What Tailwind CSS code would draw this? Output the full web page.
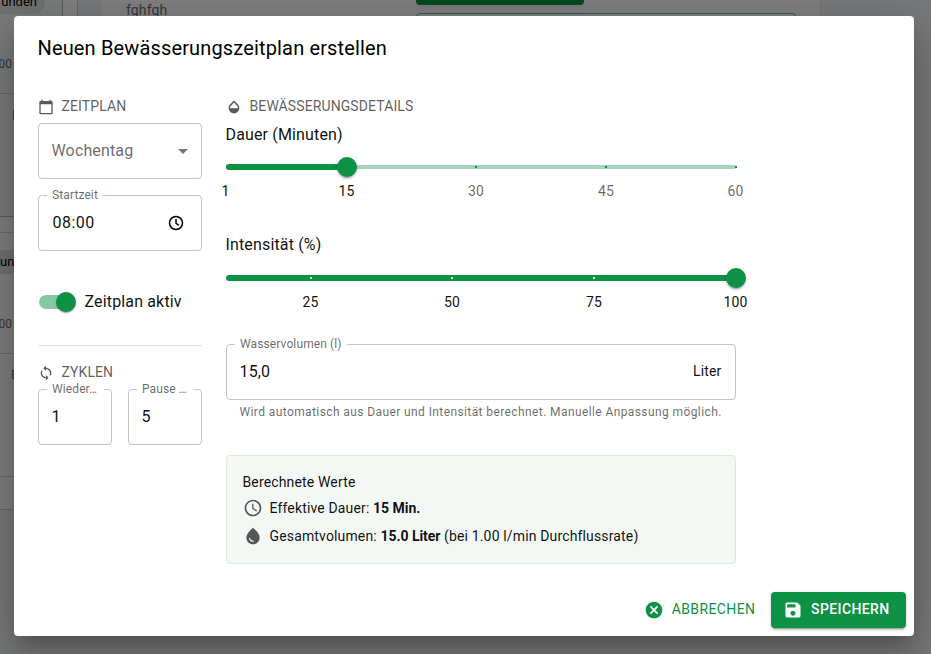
<!DOCTYPE html>
<html lang="de">
<head>
<meta charset="utf-8">
<title>Bewässerungszeitplan</title>
<script src="https://cdn.jsdelivr.net/npm/@tailwindcss/browser@4"></script>
</head>
<body class="relative h-[654px] w-[931px] overflow-hidden bg-[#f0f2f5] font-['Roboto',sans-serif] text-black/95">

<!-- Page behind the dialog -->
<div class="flex h-full items-start text-[14px]">
  <div class="h-[510px] w-[78px] shrink-0 border-r border-b border-black/20 bg-white">
    <div class="flex h-[217px] w-[63px] flex-col rounded-br border-r border-b border-black/25 bg-[#f3f8f5]">
      <div class="-mt-[10px] flex h-6 w-[45px] items-center justify-end rounded-r-full bg-black/8 pr-2 text-[13px] text-black">unden</div>
      <div class="mt-[40px] h-5 w-3 text-right text-[12px] leading-5 whitespace-nowrap text-black/60 [direction:rtl]">00</div>
      <div class="mt-[19px] h-px bg-black/15"></div>
      <div class="mt-4 ml-[13px] h-2.5 w-px bg-red-900/60"></div>
    </div>
    <div class="mt-[15px] flex w-[63px] flex-col border-t border-black/15">
      <div class="mt-[17px] flex h-6 items-center bg-black/10 text-[13px] text-black">unden</div>
      <div class="mt-[40px] h-5 w-3 text-right text-[12px] leading-5 text-black/60 [direction:rtl]">00</div>
      <div class="mt-[19px] h-px bg-black/15"></div>
      <div class="mt-[11px] ml-[11px] h-5 text-[13px] leading-5 text-red-900/70">E</div>
      <div class="mt-[91px] h-px bg-black/20"></div>
    </div>
  </div>
  <div class="ml-[22px] flex h-[510px] w-[721px] shrink-0 border-x border-black/8 bg-white">
    <div class="w-[315px] pl-[25px] text-[14px] leading-5 tracking-[0.01071em] text-black/60">fghfgh</div>
    <div class="w-[380px]">
      <div class="h-[5px] w-[168px] rounded-b bg-[#0d9144] shadow-md"></div>
      <div class="mt-2 h-10 rounded border border-[#0d9144]/60"></div>
    </div>
  </div>
</div>

<!-- Dialog -->
<div class="absolute inset-0 bg-black/50 px-[14px] py-4">
  <div class="flex h-[620px] w-[900px] flex-col rounded bg-white shadow-[0_11px_15px_-7px_rgba(0,0,0,0.2),0_24px_38px_3px_rgba(0,0,0,0.14),0_9px_46px_8px_rgba(0,0,0,0.12)]">
    <h2 class="pt-4 pr-6 pl-[23.5px] text-[20px] leading-8 tracking-[0.0075em] text-black">Neuen Bewässerungszeitplan erstellen</h2>

    <div class="mt-[31px] flex h-[481px] shrink-0 gap-6 px-6">
      <div class="flex w-[164px] flex-col">
        <div class="flex h-[22px] items-center gap-[7.5px] text-[14px] tracking-[0.00714em] text-black/65">
          <svg class="mt-px size-4 fill-black/65" viewBox="0 0 24 24"><path d="M20 3h-1V1h-2v2H7V1H5v2H4c-1.1 0-2 .9-2 2v16c0 1.1.9 2 2 2h16c1.1 0 2-.9 2-2V5c0-1.1-.9-2-2-2m0 18H4V8h16z"/></svg>
          ZEITPLAN
        </div>
        <div class="mt-[6px] flex h-14 items-center justify-between rounded border border-black/23 pr-[6px] pl-[12.5px] text-[16px] tracking-[0.00938em] text-black/60">
          Wochentag
          <svg class="size-6 fill-black/54" viewBox="0 0 24 24"><path d="m7 10 5 5 5-5z"/></svg>
        </div>
        <div class="relative mt-4 flex h-14 items-center justify-between rounded border border-black/23 pr-[17px] pl-[13.5px] text-[16px]">
          <span class="absolute -top-[9px] left-[8px] bg-white px-[5px] text-[12px] leading-4 tracking-[0.00938em] text-black/60">Startzeit</span>
          <span class="tracking-[0.03em]">08:00</span>
          <svg class="size-4 fill-none stroke-black stroke-[1.5]" viewBox="0 0 16 16"><circle cx="8" cy="8" r="6.5"/><path d="M8 4v4.2l2.8 2.2"/></svg>
        </div>
        <div class="mt-[41px] flex h-5 items-center text-[16px] tracking-[0.00938em]">
          <div class="relative ml-px h-[14px] w-[34px] rounded-full bg-[#0d9144]/50">
            <div class="absolute -top-[3px] left-[17px] size-5 rounded-full bg-[#0d9144] shadow-[0_2px_1px_-1px_rgba(0,0,0,0.2),0_1px_1px_0_rgba(0,0,0,0.14),0_1px_3px_0_rgba(0,0,0,0.12)]"></div>
          </div>
          <span class="ml-[11.5px]">Zeitplan aktiv</span>
        </div>
        <div class="mt-[33px] h-px bg-black/12"></div>
        <div class="mt-[15px] flex h-[22px] items-center gap-[7.5px] text-[14px] tracking-[0.00714em] text-black/65">
          <svg class="mt-px size-4 fill-black/65" viewBox="0 0 24 24"><path d="M12 4V1L8 5l4 4V6c3.31 0 6 2.69 6 6 0 1.01-.25 1.97-.7 2.8l1.46 1.46C19.54 15.03 20 13.57 20 12c0-4.42-3.58-8-8-8m0 14c-3.31 0-6-2.69-6-6 0-1.01.25-1.97.7-2.8L5.24 7.74C4.46 8.97 4 10.43 4 12c0 4.42 3.58 8 8 8v3l4-4-4-4z"/></svg>
          ZYKLEN
        </div>
        <div class="mt-[6px] flex gap-4">
          <div class="relative flex h-14 flex-1 items-center rounded border border-black/23 pl-[12.5px] text-[16px]">
            <span class="absolute -top-[9px] left-[8px] w-[57px] bg-white pl-[5px] text-[12px] leading-4 tracking-[0.00938em] text-black/60">Wieder…</span>
            1
          </div>
          <div class="relative flex h-14 flex-1 items-center rounded border border-black/23 pl-[12.5px] text-[16px]">
            <span class="absolute -top-[9px] left-[8px] w-[57px] bg-white pl-[5px] text-[12px] leading-4 tracking-[0.00938em] text-black/60">Pause …</span>
            5
          </div>
        </div>
      </div>

      <div class="flex w-[510px] flex-col">
        <div class="flex h-[22px] items-center gap-[7.5px] text-[14px] tracking-[0.00714em] text-black/65">
          <svg class="mt-px size-4 fill-black/65" viewBox="0 0 24 24"><path d="M17.66 8 12 2.35 6.34 8C4.78 9.56 4 11.64 4 13.64s.78 4.11 2.34 5.67 3.61 2.35 5.66 2.35 4.1-.79 5.66-2.35S20 15.64 20 13.64 19.22 9.56 17.66 8M6 14c.01-2 .62-3.27 1.76-4.4L12 5.27l4.24 4.38C17.38 10.77 17.99 12 18 14z"/></svg>
          BEWÄSSERUNGSDETAILS
        </div>
        <div class="mt-[6px] -ml-[0.5px] h-6 text-[16px] leading-6 tracking-[0.00938em]">Dauer (Minuten)</div>
        <div class="relative mt-[18px] h-1 rounded-full bg-[#0d9144]/38 text-[14px] leading-5 tracking-[0.01071em]">
          <div class="absolute -top-px left-0 h-[6px] w-[121px] rounded-full bg-[#0d9144]"></div>
          <div class="absolute top-px left-[249px] size-[2px] bg-[#0d9144]"></div>
          <div class="absolute top-px left-[379px] size-[2px] bg-[#0d9144]"></div>
          <div class="absolute top-px left-[509px] size-[2px] bg-[#0d9144]"></div>
          <div class="absolute -top-2 left-[111px] size-5 rounded-full bg-[#0d9144] shadow-[0_3px_1px_-2px_rgba(0,0,0,0.2),0_2px_2px_0_rgba(0,0,0,0.14),0_1px_5px_0_rgba(0,0,0,0.12)]"></div>
          <span class="absolute top-4 -left-[0.5px] -translate-x-1/2">1</span>
          <span class="absolute top-4 left-[120.5px] -translate-x-1/2">15</span>
          <span class="absolute top-4 left-[250px] -translate-x-1/2 text-black/60">30</span>
          <span class="absolute top-4 left-[380px] -translate-x-1/2 text-black/60">45</span>
          <span class="absolute top-4 left-[509.5px] -translate-x-1/2 text-black/60">60</span>
        </div>
        <div class="mt-[64px] -ml-[0.5px] h-6 text-[16px] leading-6 tracking-[0.00938em]">Intensität (%)</div>
        <div class="relative mt-[18px] h-[6px] rounded-full bg-[#0d9144] text-[14px] leading-5 tracking-[0.01071em]">
          <div class="absolute top-[2px] left-[84px] size-[2px] bg-white/80"></div>
          <div class="absolute top-[2px] left-[225px] size-[2px] bg-white/80"></div>
          <div class="absolute top-[2px] left-[367px] size-[2px] bg-white/80"></div>
          <div class="absolute -top-[7px] left-[500px] size-5 rounded-full bg-[#0d9144] shadow-[0_3px_1px_-2px_rgba(0,0,0,0.2),0_2px_2px_0_rgba(0,0,0,0.14),0_1px_5px_0_rgba(0,0,0,0.12)]"></div>
          <span class="absolute top-[17px] left-[84.5px] -translate-x-1/2">25</span>
          <span class="absolute top-[17px] left-[226px] -translate-x-1/2">50</span>
          <span class="absolute top-[17px] left-[368px] -translate-x-1/2">75</span>
          <span class="absolute top-[17px] left-[509.5px] -translate-x-1/2">100</span>
        </div>
        <div class="relative mt-[63px] flex h-14 shrink-0 items-center justify-between rounded border border-black/23 pr-[13.5px] pl-[12.5px] text-[16px] tracking-[0.00938em]">
          <span class="absolute -top-[9px] left-[8px] bg-white px-[5px] text-[12px] leading-4 tracking-[0.00938em] text-black/60">Wasservolumen (l)</span>
          15,0
          <span class="-mt-px text-[14px] tracking-[0.01071em]">Liter</span>
        </div>
        <div class="mt-[2px] pl-[13.5px] text-[12px] leading-5 tracking-[0.03333em] whitespace-nowrap text-black/60">Wird automatisch aus Dauer und Intensität berechnet. Manuelle Anpassung möglich.</div>
        <div class="mt-[33px] flex h-[109px] shrink-0 flex-col rounded border border-[#d9ebe0] bg-[#f3f8f5] pt-4 pr-4 pl-[15.5px] text-[14px] leading-5 tracking-[0.01071em]">
          <div>Berechnete Werte</div>
          <div class="mt-[6px] flex h-5 items-center gap-[7px]">
            <svg class="size-5 fill-black/65" viewBox="0 0 24 24"><path d="M11.99 2C6.47 2 2 6.48 2 12s4.47 10 9.99 10C17.52 22 22 17.52 22 12S17.52 2 11.99 2M12 20c-4.42 0-8-3.58-8-8s3.58-8 8-8 8 3.58 8 8-3.58 8-8 8m.5-13H11v6l5.25 3.15.75-1.23-4.5-2.67z"/></svg>
            <span>Effektive Dauer: <b class="font-bold tracking-[-0.003em]">15 Min.</b></span>
          </div>
          <div class="mt-2 flex h-5 items-center gap-[7px]">
            <svg class="size-5 fill-black/65" viewBox="0 0 24 24"><path d="M12 2c-5.33 4.55-8 8.48-8 11.8 0 4.98 3.8 8.2 8 8.2s8-3.22 8-8.2c0-3.32-2.67-7.25-8-11.8M7.83 14c.37 0 .67.26.74.62.41 2.22 2.28 2.98 3.64 2.87.43-.02.79.32.79.75 0 .4-.32.73-.72.75-2.13.13-4.62-1.09-5.19-4.12-.08-.45.28-.87.74-.87"/></svg>
            <span>Gesamtvolumen: <b class="font-bold tracking-[-0.003em]">15.0 Liter</b> (bei 1.00 l/min Durchflussrate)</span>
          </div>
        </div>
      </div>
    </div>

    <div class="mt-4 flex items-center justify-end gap-2 pr-2 text-[14px] tracking-[0.02857em]">
      <button class="flex h-9 items-center gap-[7.5px] pr-[7.5px] pl-2 text-[#0d9144]">
        <svg class="size-5 fill-current" viewBox="0 0 24 24"><path d="M12 2C6.47 2 2 6.47 2 12s4.47 10 10 10 10-4.47 10-10S17.53 2 12 2m5 13.59L15.59 17 12 13.41 8.41 17 7 15.59 10.59 12 7 8.41 8.41 7 12 10.59 15.59 7 17 8.41 13.41 12z"/></svg>
        <span class="-mt-0.5">ABBRECHEN</span>
      </button>
      <button class="flex h-9 w-[135px] items-center gap-2 rounded bg-[#0d9144] pl-3 font-medium text-white shadow-[0_3px_1px_-2px_rgba(0,0,0,0.2),0_2px_2px_0_rgba(0,0,0,0.14),0_1px_5px_0_rgba(0,0,0,0.12)]">
        <svg class="size-5 fill-current" viewBox="0 0 24 24"><path d="M17 3H5c-1.11 0-2 .9-2 2v14c0 1.1.89 2 2 2h14c1.1 0 2-.9 2-2V7zm-5 16c-1.66 0-3-1.34-3-3s1.34-3 3-3 3 1.34 3 3-1.34 3-3 3m3-10H5V5h10z"/></svg>
        <span class="-mt-0.5">SPEICHERN</span>
      </button>
    </div>
  </div>
</div>
</body>
</html>
